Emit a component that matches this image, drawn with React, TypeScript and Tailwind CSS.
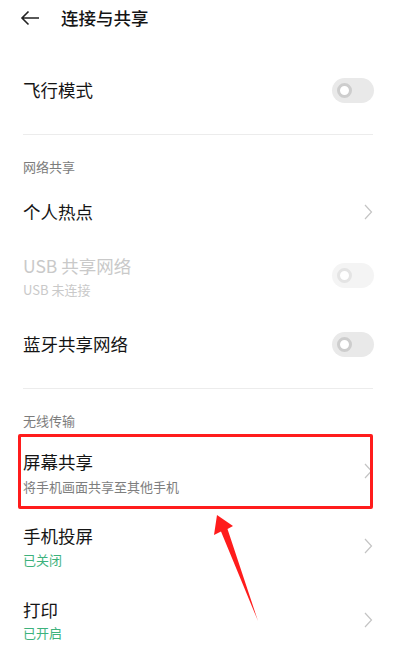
import React from "react";

const FONT = { fontFamily: '"Noto Sans CJK SC", "Noto Sans", sans-serif' };

function Toggle({ faded }: { faded?: boolean }) {
  return (
    <div
      className={
        "flex h-[25px] w-[42px] items-center rounded-full pl-[5px] " +
        (faded ? "bg-[#f4f4f4]" : "bg-[#e9e9e9]")
      }
    >
      <div
        className={
          "h-[15px] w-[15px] rounded-full border-[3px] bg-white " +
          (faded ? "border-[#e4e4e4]" : "border-[#cdcdcd]")
        }
      />
    </div>
  );
}

function Chevron() {
  return (
    <svg width="10" height="18" viewBox="0 0 10 18" className="mr-[1px]">
      <path d="M2 2 L8.5 9 L2 16" fill="none" stroke="#c4c4c4" strokeWidth="1.2" />
    </svg>
  );
}

function Divider({ className }: { className?: string }) {
  return <div className={"mx-[23px] h-px bg-[#ececec] " + (className ?? "")} />;
}

export default function App() {
  return (
    <div className="relative h-[662px] w-[396px] overflow-hidden bg-white text-[#151515]" style={FONT}>
      {/* top bar */}
      <header className="flex h-[36px] items-center pl-[20px]">
        <svg width="20" height="16" viewBox="0 0 20 16">
          <path d="M19 8 H2 M8.5 1.5 L2 8 L8.5 14.5" fill="none" stroke="#222" strokeWidth="1.6" />
        </svg>
        <span className="ml-[21px] text-[17.5px] font-medium leading-none">连接与共享</span>
      </header>

      {/* airplane mode */}
      <div className="mt-[22px] flex h-[64px] items-center justify-between pl-[23px] pr-[22px]">
        <span className="text-[17.5px]">飞行模式</span>
        <Toggle />
      </div>
      <Divider className="mt-[12px]" />

      {/* network sharing */}
      <div className="h-[50px] pl-[23px] pt-[24px] text-[13px] leading-[16px] text-[#7c7c7c]">网络共享</div>
      <div className="flex h-[54px] items-center justify-between pl-[23px] pr-[22px]">
        <span className="text-[17.5px]">个人热点</span>
        <Chevron />
      </div>
      <div className="flex h-[73px] items-center justify-between pl-[23px] pr-[22px]">
        <div className="flex flex-col pt-[2px]">
          <span className="text-[17.5px] leading-[24px] text-[#c9c9c9]">USB 共享网络</span>
          <span className="mt-[3px] text-[13px] leading-[18px] text-[#c9c9c9]">USB 未连接</span>
        </div>
        <Toggle faded />
      </div>
      <div className="flex h-[64px] items-center justify-between pl-[23px] pr-[22px]">
        <span className="text-[17.5px]">蓝牙共享网络</span>
        <Toggle />
      </div>
      <Divider className="mt-[12px]" />

      {/* wireless transfer */}
      <div className="h-[45px] pl-[23px] pt-[24px] text-[13px] leading-[16px] text-[#7c7c7c]">无线传输</div>
      <div className="flex h-[74px] items-center justify-between pl-[23px] pr-[22px]">
        <div className="flex flex-col pt-[3px]">
          <span className="text-[17.5px] leading-[24px]">屏幕共享</span>
          <span className="mt-[4px] text-[13px] leading-[18px] text-[#7e7e7e]">将手机画面共享至其他手机</span>
        </div>
        <Chevron />
      </div>
      <div className="flex h-[76px] items-center justify-between pl-[23px] pr-[22px]">
        <div className="flex flex-col">
          <span className="text-[17.5px] leading-[24px]">手机投屏</span>
          <span className="mt-[3px] text-[13px] leading-[18px] text-[#3db27c]">已关闭</span>
        </div>
        <Chevron />
      </div>
      <div className="flex h-[72px] items-center justify-between pl-[23px] pr-[22px]">
        <div className="flex flex-col">
          <span className="text-[17.5px] leading-[24px]">打印</span>
          <span className="mt-[2px] text-[13px] leading-[18px] text-[#3db27c]">已开启</span>
        </div>
        <Chevron />
      </div>

      {/* annotation overlay */}
      <div className="absolute left-[18px] top-[434px] h-[75px] w-[355px] rounded-[2px] border-[3px] border-[#ff1c1c]" />
      <svg className="absolute left-0 top-0" width="396" height="662" viewBox="0 0 396 662">
        <polygon
          points="217,515 233,526 227.5,529 258,621 221,531.5 214,535"
          fill="#ff1c1c"
        />
      </svg>
    </div>
  );
}
